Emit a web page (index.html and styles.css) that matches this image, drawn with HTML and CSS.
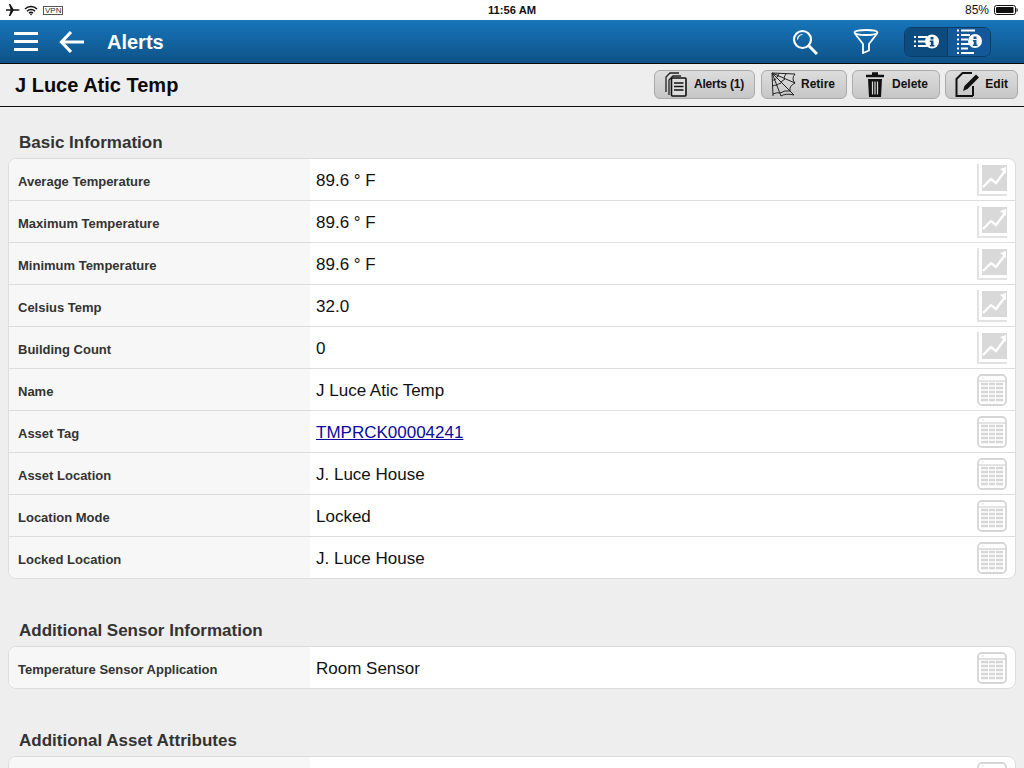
FILE: index.html
```html
<!DOCTYPE html>
<html lang="en">
<head>
    <meta charset="UTF-8">
    <meta name="viewport" content="width=device-width, initial-scale=1.0">
    <title>Alerts</title>
    <link rel="stylesheet" href="styles.css">
</head>
<body>
    <svg class="defs" width="0" height="0">
        <symbol id="chart" viewBox="0 0 30 32">
            <path d="M1 0v31h29" fill="none" stroke="#e2e2e2" stroke-width="2"/>
            <rect x="5" y="1" width="25" height="26" fill="#d9d9d9"/>
            <path d="M6 23l8-8 5 4 9-12" fill="none" stroke="#fff" stroke-width="2.400"/>
            <path d="M23 5l6-2v7z" fill="#fff"/>
        </symbol>
        <symbol id="table" viewBox="0 0 30 32">
            <rect x="1" y="1" width="28" height="30" rx="4" fill="#fff" stroke="#d6d6d6" stroke-width="1.800"/>
            <path d="M1 7h28" stroke="#d6d6d6" stroke-width="1.300"/>
            <path d="M5 4h1.500" stroke="#d6d6d6"/>
            <path d="M4 10h7M12 10h6M19 10h7M4 14h7M12 14h6M19 14h7M4 18h7M12 18h6M19 18h7M4 22h7M12 22h6M19 22h7M4 26h7M12 26h6M19 26h7" stroke="#d6d6d6" stroke-width="2.400"/>
        </symbol>
    </svg>

    <!-- Status bar -->
    <div class="status-bar">
        <div class="status-left">
            <svg width="14" height="12" viewBox="0 0 14 12"><path d="M0 5.200h4.600L2.800 0h1.500l3.200 5.200h3.700c1 0 2.800.3 2.800.8s-1.800.8-2.800.8H7.500L4.300 12H2.800l1.800-5.200H0z" fill="#111"/></svg>
            <svg width="14" height="11" viewBox="0 0 14 11"><path d="M1 4a8.500 8.500 0 0 1 12 0M3 6.200a5.700 5.700 0 0 1 8 0M5 8.200a2.800 2.800 0 0 1 4 0" fill="none" stroke="#111" stroke-width="1.500"/><path d="M5.800 9L7 10.500 8.200 9a1.800 1.800 0 0 0-2.400 0z" fill="#111"/></svg>
            <span class="vpn">VPN</span>
        </div>
        <div class="status-time">11:56 AM</div>
        <div class="status-right">
            <span>85%</span>
            <svg width="24" height="10" viewBox="0 0 24 10"><rect x=".5" y=".5" width="21" height="9" rx="2" fill="none" stroke="#111"/><rect x="2" y="2" width="17.500" height="6" rx=".8" fill="#111"/><path d="M22.500 3v4c.8 0 1.200-.8 1.200-2s-.4-2-1.200-2z" fill="#111"/></svg>
        </div>
    </div>

    <!-- Blue nav bar -->
    <div class="nav-bar">
        <svg class="nav-menu" width="24" height="19" viewBox="0 0 24 19"><path d="M0 1.500h24M0 9.500h24M0 17.500h24" stroke="#fff" stroke-width="3"/></svg>
        <svg class="nav-back" width="25" height="24" viewBox="0 0 25 24"><path d="M12 2L2.500 12l9.500 10M3 12h22" fill="none" stroke="#fff" stroke-width="3.200"/></svg>
        <span class="nav-title">Alerts</span>
        <svg class="nav-search" width="26" height="26" viewBox="0 0 26 26"><circle cx="10.500" cy="10.500" r="8.500" fill="none" stroke="#fff" stroke-width="2.200"/><path d="M5.500 10.500a5 5 0 0 1 5-5" fill="none" stroke="#fff" stroke-width="1.200"/><path d="M17 17l8 8" stroke="#fff" stroke-width="3"/></svg>
        <svg class="nav-filter" width="26" height="25" viewBox="0 0 26 25"><ellipse cx="13" cy="3.500" rx="11.500" ry="2.500" fill="none" stroke="#fff" stroke-width="1.800"/><path d="M1.500 4l8.500 11v9l6-2.500V15l8.500-11" fill="none" stroke="#fff" stroke-width="1.800"/></svg>
        <div class="segment">
            <div class="segment-item active">
                <svg width="25" height="15" viewBox="0 0 25 15"><path d="M0 3h2M4 3h9M0 7.500h2M4 7.500h7M0 12h2M4 12h9" stroke="#fff" stroke-width="2"/><circle cx="18" cy="7.500" r="7" fill="#fff"/><path d="M16.500 3h3v2.500h-3zM15.800 6.500h3.700v4.500h1v1.500h-4.700V11h1V8h-1z" fill="#0d4b7e"/></svg>
            </div>
            <div class="segment-item">
                <svg width="25" height="26" viewBox="0 0 25 26"><path d="M0 1.500h2M4 1.500h14M0 6h2M4 6h9M0 10.500h2M4 10.500h7M0 15h2M4 15h9M0 19.500h2M4 19.500h7M0 24h2M4 24h13" stroke="#fff" stroke-width="2"/><circle cx="18" cy="12" r="7" fill="#fff"/><path d="M16.500 7.500h3V10h-3zM15.800 11h3.700v4.500h1V17h-4.700v-1.500h1v-3h-1z" fill="#13599a"/></svg>
            </div>
        </div>
    </div>

    <!-- Page heading with actions -->
    <div class="title-bar">
        <h1>J Luce Atic Temp</h1>
        <div class="actions">
            <button class="btn btn-alerts">
                <svg width="22" height="25" viewBox="0 0 22 25"><path d="M1 20V5l4-4h9M4 23V8l4-4h8" fill="none" stroke="#222" stroke-width="1.300"/><rect x="6.500" y="6" width="14.500" height="18" rx="1" fill="#ddd" stroke="#111" stroke-width="1.600"/><path d="M9 11h9.500M9 14.500h9.500M9 18h9.500" stroke="#111" stroke-width="1.500"/></svg>
                Alerts (1)
            </button>
            <button class="btn btn-retire">
                <svg width="25" height="25" viewBox="0 0 25 25"><path d="M1 1L24 2M1 1L24 11M1 1L23 23M1 1L10 24M1 1L2 24" fill="none" stroke="#222"/><path d="M8 1.500Q6 3 7.500 4Q5 5 5.500 6Q4 7 4 8Q3 8 1.300 8M15 2Q12 6 14 7Q10 9 10 11Q7 12 6 13Q4 13 1.500 14M24 2Q20 7 24 11Q18 14 19 19Q14 18 9 21Q6 20 2 22M10 24Q15 21 23 23" fill="none" stroke="#222"/></svg>
                Retire
            </button>
            <button class="btn btn-delete">
                <svg width="20" height="25" viewBox="0 0 20 25"><path d="M7 1.500h6M1 4h18" stroke="#111" stroke-width="2.500"/><path d="M3 7h14l-1 18H4z" fill="#111"/><path d="M7.500 9.500v13M10 9.500v13M12.500 9.500v13" stroke="#ddd" stroke-width="1.200"/></svg>
                Delete
            </button>
            <button class="btn btn-edit">
                <svg width="25" height="25" viewBox="0 0 25 25"><path d="M18 24H1.500V7l6-6H17" fill="none" stroke="#111" stroke-width="2"/><path d="M18 14v10" stroke="#111" stroke-width="2"/><path d="M8 19l1.500-5L21 2.500l3 3L12.500 17z" fill="#111"/></svg>
                Edit
            </button>
        </div>
    </div>

    <div class="content">
        <h2>Basic Information</h2>
        <div class="card">
            <div class="row"><div class="label">Average Temperature</div><div class="value">89.6 ° F</div><svg class="icon-chart"><use href="#chart"/></svg></div>
            <div class="row"><div class="label">Maximum Temperature</div><div class="value">89.6 ° F</div><svg class="icon-chart"><use href="#chart"/></svg></div>
            <div class="row"><div class="label">Minimum Temperature</div><div class="value">89.6 ° F</div><svg class="icon-chart"><use href="#chart"/></svg></div>
            <div class="row"><div class="label">Celsius Temp</div><div class="value">32.0</div><svg class="icon-chart"><use href="#chart"/></svg></div>
            <div class="row"><div class="label">Building Count</div><div class="value">0</div><svg class="icon-chart"><use href="#chart"/></svg></div>
            <div class="row"><div class="label">Name</div><div class="value">J Luce Atic Temp</div><svg class="icon-table"><use href="#table"/></svg></div>
            <div class="row"><div class="label">Asset Tag</div><div class="value"><a href="#">TMPRCK00004241</a></div><svg class="icon-table"><use href="#table"/></svg></div>
            <div class="row"><div class="label">Asset Location</div><div class="value">J. Luce House</div><svg class="icon-table"><use href="#table"/></svg></div>
            <div class="row"><div class="label">Location Mode</div><div class="value">Locked</div><svg class="icon-table"><use href="#table"/></svg></div>
            <div class="row"><div class="label">Locked Location</div><div class="value">J. Luce House</div><svg class="icon-table"><use href="#table"/></svg></div>
        </div>

        <h2>Additional Sensor Information</h2>
        <div class="card">
            <div class="row"><div class="label">Temperature Sensor Application</div><div class="value">Room Sensor</div><svg class="icon-table"><use href="#table"/></svg></div>
        </div>

        <h2>Additional Asset Attributes</h2>
        <div class="card">
            <div class="row"><div class="label"></div><div class="value"></div><svg class="icon-table"><use href="#table"/></svg></div>
        </div>
    </div>
</body>
</html>
```

FILE: styles.css
```css
html, body {
    height: 768px;
    overflow: hidden;
}
body {
    margin: 0;
    font-family: "Liberation Sans", Arial, sans-serif;
    background-color: #eeeeee;
}
.defs {
    display: block;
    height: 0;
}
.status-bar {
    height: 20px;
    background-color: #fff;
    display: grid;
    grid-template-columns: 1fr auto 1fr;
    align-items: center;
    padding: 0 6px;
    font-size: 11px;
    color: #111;
    box-sizing: border-box;
}
.status-left {
    display: flex;
    align-items: center;
    gap: 4px;
}
.vpn {
    border: 1px solid #555;
    font-size: 8px;
    line-height: 7px;
    padding: 0 1px;
    color: #333;
    margin-left: 1px;
}
.status-time {
    font-weight: bold;
    font-size: 11.2px;
}
.status-right {
    display: flex;
    align-items: center;
    justify-content: flex-end;
    gap: 5px;
    font-size: 12px;
}
.nav-bar {
    height: 44px;
    box-sizing: border-box;
    background: linear-gradient(#1675ba, #0f5288);
    border-bottom: 1px solid #0a0a0a;
    display: flex;
    align-items: center;
    padding-left: 14px;
    color: #fff;
}
.nav-back {
    margin-left: 21px;
}
.nav-title {
    margin-left: 23px;
    padding-top: 2px;
    font-size: 20px;
    font-weight: bold;
    flex: 1;
}
.nav-filter {
    margin-left: 35px;
}
.segment {
    display: flex;
    margin-left: 25px;
    margin-right: 33px;
    width: 87px;
    height: 30px;
    border: 1px solid #0b3c66;
    border-radius: 7px;
    overflow: hidden;
    box-sizing: border-box;
}
.segment-item {
    flex: 1;
    display: flex;
    align-items: center;
    justify-content: center;
    background-color: #13599a;
}
.segment-item.active {
    background-color: #0d4b7e;
    border-right: 1px solid #0b3c66;
}
.title-bar {
    height: 43px;
    box-sizing: border-box;
    border-bottom: 1px solid #111;
    background-color: #eeeeee;
    display: flex;
    align-items: center;
    justify-content: space-between;
    padding: 0 6px 2px 15px;
}
h1 {
    margin: 0;
    padding-top: 2px;
    font-size: 20px;
    color: #0a0a0a;
}
.actions {
    display: flex;
    gap: 5px;
}
.btn {
    display: flex;
    align-items: center;
    justify-content: space-between;
    height: 29px;
    padding: 0 11px 0 10px;
    box-sizing: border-box;
    border: 1px solid #aaa;
    border-radius: 6px;
    background: linear-gradient(#dddddd, #c6c6c6);
    font-family: inherit;
    font-size: 12px;
    font-weight: bold;
    color: #111;
}
.btn-alerts { width: 101px; margin-right: 1px; letter-spacing: -0.2px; padding-right: 10px; }
.btn-retire { width: 86px; padding-left: 9px; }
.btn-delete { width: 88px; padding-left: 12px; }
.btn-edit { width: 73px; padding-left: 9px; padding-right: 9px; }
.content {
    padding: 0 8px;
}
h2 {
    margin: 0;
    padding-left: 11px;
    font-size: 17px;
    line-height: 20px;
    color: #333;
}
.content h2:first-child {
    padding-top: 26px;
    padding-bottom: 5px;
}
.card + h2 {
    padding-top: 42px;
    padding-bottom: 5px;
}
.card {
    background-color: #fff;
    border: 1px solid #dddddd;
    border-radius: 8px;
    overflow: hidden;
}
.row {
    height: 42px;
    box-sizing: border-box;
    display: flex;
    align-items: center;
    border-bottom: 1px solid #dddddd;
}
.row:last-child {
    height: 41px;
    border-bottom: 0;
}
.label {
    width: 301px;
    height: 100%;
    flex-shrink: 0;
    box-sizing: border-box;
    padding: 4px 0 0 9px;
    display: flex;
    align-items: center;
    background-color: #f7f7f7;
    font-size: 13px;
    font-weight: bold;
    color: #333;
}
.value {
    flex: 1;
    padding: 2px 0 0 6px;
    font-size: 17px;
    color: #111;
}
.value a {
    color: #0a0a9e;
}
.icon-chart {
    width: 30px;
    height: 32px;
    margin-right: 8px;
}
.icon-table {
    width: 30px;
    height: 32px;
    margin-right: 8px;
}
```
